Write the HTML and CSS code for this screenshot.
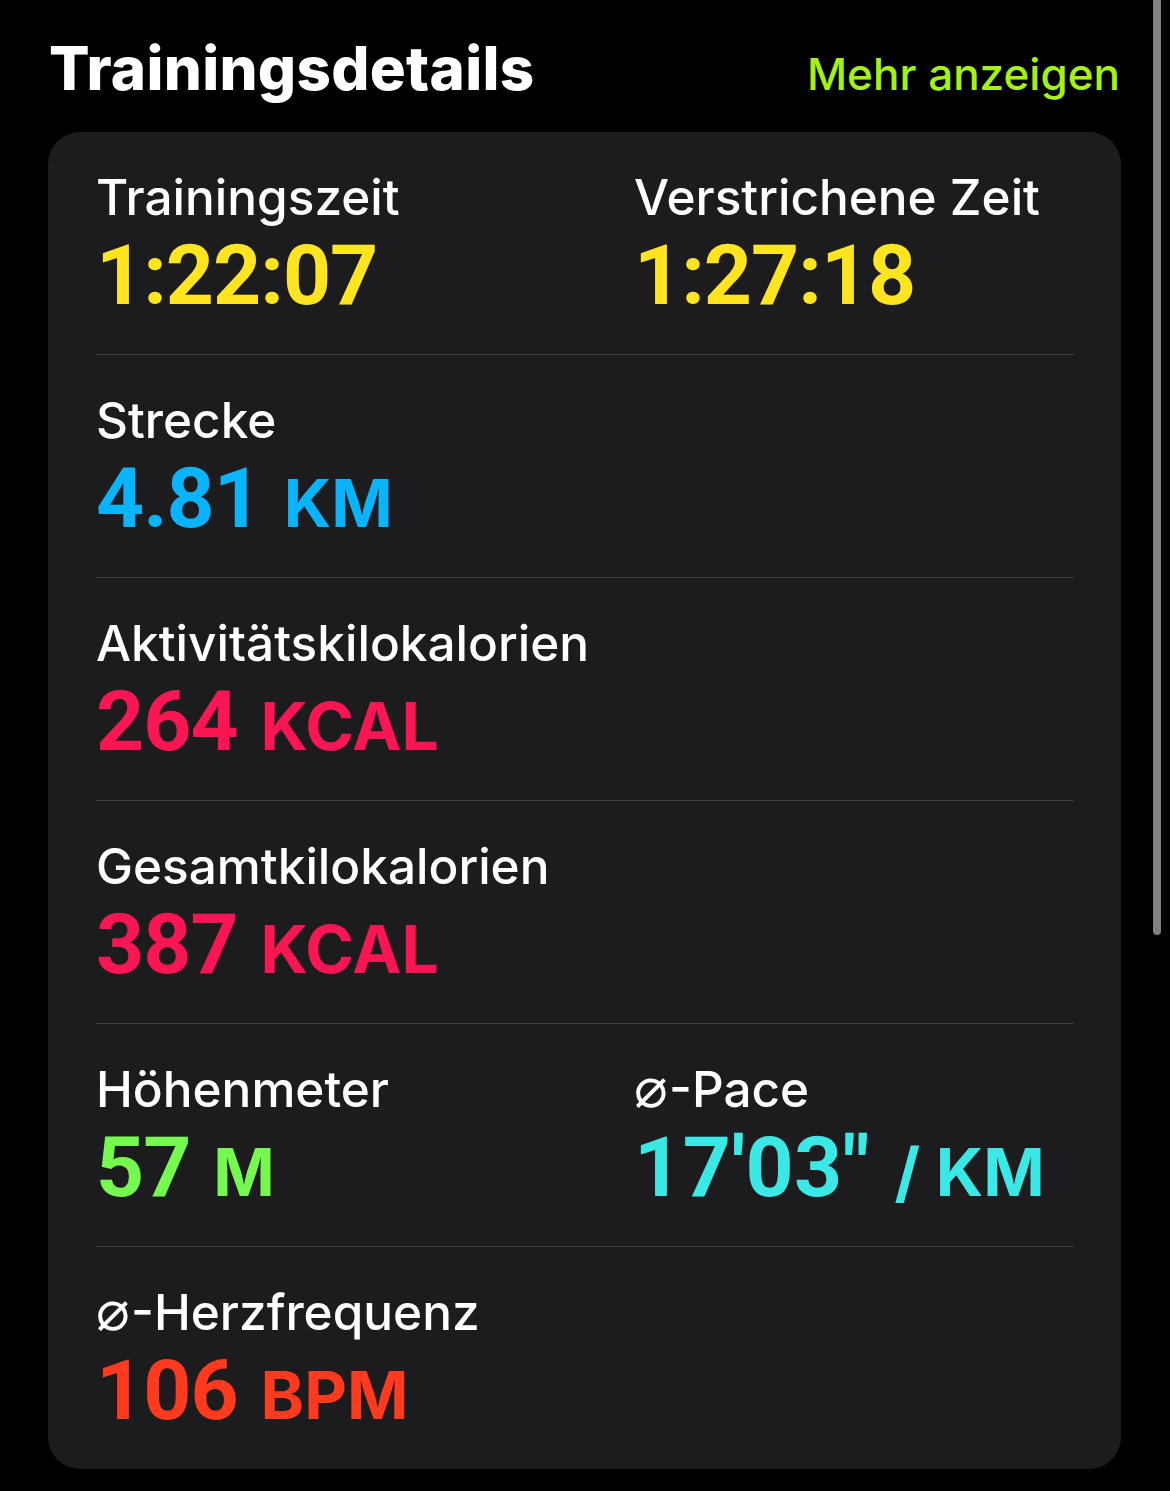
FILE: index.html
```html
<!DOCTYPE html>
<html lang="de">
<head>
  <meta charset="UTF-8" />
  <title>Trainingsdetails</title>
  <link rel="stylesheet" href="styles.css">
</head>
<body>

  <div class="scrollbar"></div>

  <header>
    <h1>Trainingsdetails</h1>
    <a class="mehr" href="#">Mehr anzeigen</a>
  </header>

  <section class="karte">
    <div class="zeile zwei">
      <div class="wert">
        <div class="titel">Trainingszeit</div>
        <div class="zahl gelb">1:22:07</div>
      </div>
      <div class="wert">
        <div class="titel">Verstrichene Zeit</div>
        <div class="zahl gelb">1:27:18</div>
      </div>
    </div>

    <div class="zeile">
      <div class="wert">
        <div class="titel">Strecke</div>
        <div class="zahl blau">4.81 <span class="einheit">KM</span></div>
      </div>
    </div>

    <div class="zeile">
      <div class="wert">
        <div class="titel">Aktivitätskilokalorien</div>
        <div class="zahl pink">264 <span class="einheit">KCAL</span></div>
      </div>
    </div>

    <div class="zeile">
      <div class="wert">
        <div class="titel">Gesamtkilokalorien</div>
        <div class="zahl pink">387 <span class="einheit">KCAL</span></div>
      </div>
    </div>

    <div class="zeile zwei">
      <div class="wert">
        <div class="titel">Höhenmeter</div>
        <div class="zahl gruen">57 <span class="einheit">M</span></div>
      </div>
      <div class="wert">
        <div class="titel"><span class="schnitt">⌀</span>-Pace</div>
        <div class="zahl tuerkis eng">17'03" <span class="einheit">/ KM</span></div>
      </div>
    </div>

    <div class="zeile">
      <div class="wert">
        <div class="titel"><span class="schnitt">⌀</span>-Herzfrequenz</div>
        <div class="zahl rot">106 <span class="einheit">BPM</span></div>
      </div>
    </div>
  </section>

</body>
</html>
```

FILE: styles.css
```css
body {
  margin: 0;
  padding: 0 49px 0 48px;
  background-color: #000;
  color: #fff;
  font-family: Inter, 'Liberation Sans', sans-serif;
  min-height: 1491px;
  box-sizing: border-box;
}

.scrollbar {
  position: absolute;
  top: 0;
  left: 1153px;
  width: 8px;
  height: 935px;
  background-color: #808080;
  border-radius: 0 0 4px 4px;
}

header {
  display: flex;
  justify-content: space-between;
  align-items: baseline;
  padding: 38px 0 0 1px;
  margin-bottom: 31px;
}

h1 {
  margin: 0;
  font-size: 60px;
  line-height: 60px;
  font-weight: 800;
  letter-spacing: 0.3px;
}

.mehr {
  color: #a5f20f;
  font-size: 44px;
  font-weight: 500;
  text-decoration: none;
  margin-right: 1px;
}

.karte {
  background-color: #1c1c1e;
  border-radius: 32px;
  padding: 0 47px 0 48px;
}

.zeile {
  display: grid;
  grid-template-columns: 1fr;
  padding: 35px 0 31px;
  border-bottom: 1px solid #3d3d40;
}

.zeile:last-child {
  border-bottom: none;
}

.zeile.zwei {
  grid-template-columns: 538px 1fr;
}

.titel {
  font-size: 49.5px;
  line-height: 60px;
  font-weight: 500;
  white-space: nowrap;
}

.schnitt {
  font-family: 'DejaVu Sans', sans-serif;
  font-weight: 300;
  font-size: 56px;
  line-height: 1;
  margin-right: 1px;
}

.zahl {
  font-family: Roboto, Inter, sans-serif;
  font-size: 84px;
  line-height: 96px;
  font-weight: 700;
  letter-spacing: -1px;
  padding-top: 1px;
  margin-bottom: -1px;
  white-space: nowrap;
}

.zahl.eng {
  letter-spacing: 0.5px;
}

.einheit {
  font-family: Inter, sans-serif;
  font-size: 66px;
  line-height: 1;
  font-weight: 700;
  letter-spacing: 0;
  margin-left: 3px;
}

.gelb { color: #ffe51f; }
.blau { color: #08b4fc; }
.pink { color: #fa1553; }
.gruen { color: #76f94f; }
.tuerkis { color: #3ae9e6; }
.rot { color: #ff3a1e; }
```
